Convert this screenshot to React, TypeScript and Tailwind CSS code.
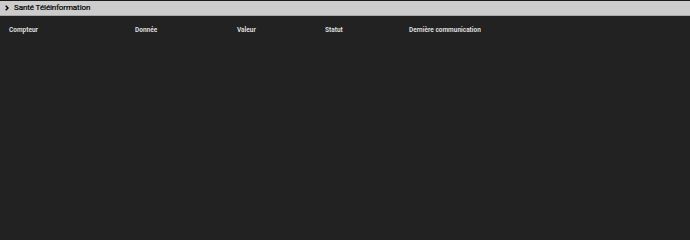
export default function App() {
  const cols = [
    { label: "Compteur", w: "w-[126px]" },
    { label: "Donnée", w: "w-[102px]" },
    { label: "Valeur", w: "w-[88px]" },
    { label: "Statut", w: "w-[84px]" },
    { label: "Dernière communication", w: "flex-1" },
  ];
  return (
    <div className="w-[690px] h-[240px] bg-[#222222] font-['Roboto',sans-serif] overflow-hidden">
      <div className="h-[1px] bg-[#1a1a1a]" />
      <div className="h-[15px] bg-[#cccccc] border-b border-[#a9a9a9] flex items-center pl-[5px] gap-[5px]">
        <svg width="4" height="6" viewBox="0 0 4 6">
          <path d="M0.7 0.7 L3 3 L0.7 5.3" fill="none" stroke="#000" strokeWidth="1.4" />
        </svg>
        <span className="text-[8px] leading-none text-black [-webkit-text-stroke:0.2px_#000] tracking-[-0.1px]">
          Santé Téléinformation
        </span>
      </div>
      <div className="flex pl-[9px] pt-[11px]">
        {cols.map((c) => (
          <div key={c.label} className={`${c.w} text-[6.5px] font-bold text-[#dddddd] leading-none`}>
            {c.label}
          </div>
        ))}
      </div>
    </div>
  );
}
